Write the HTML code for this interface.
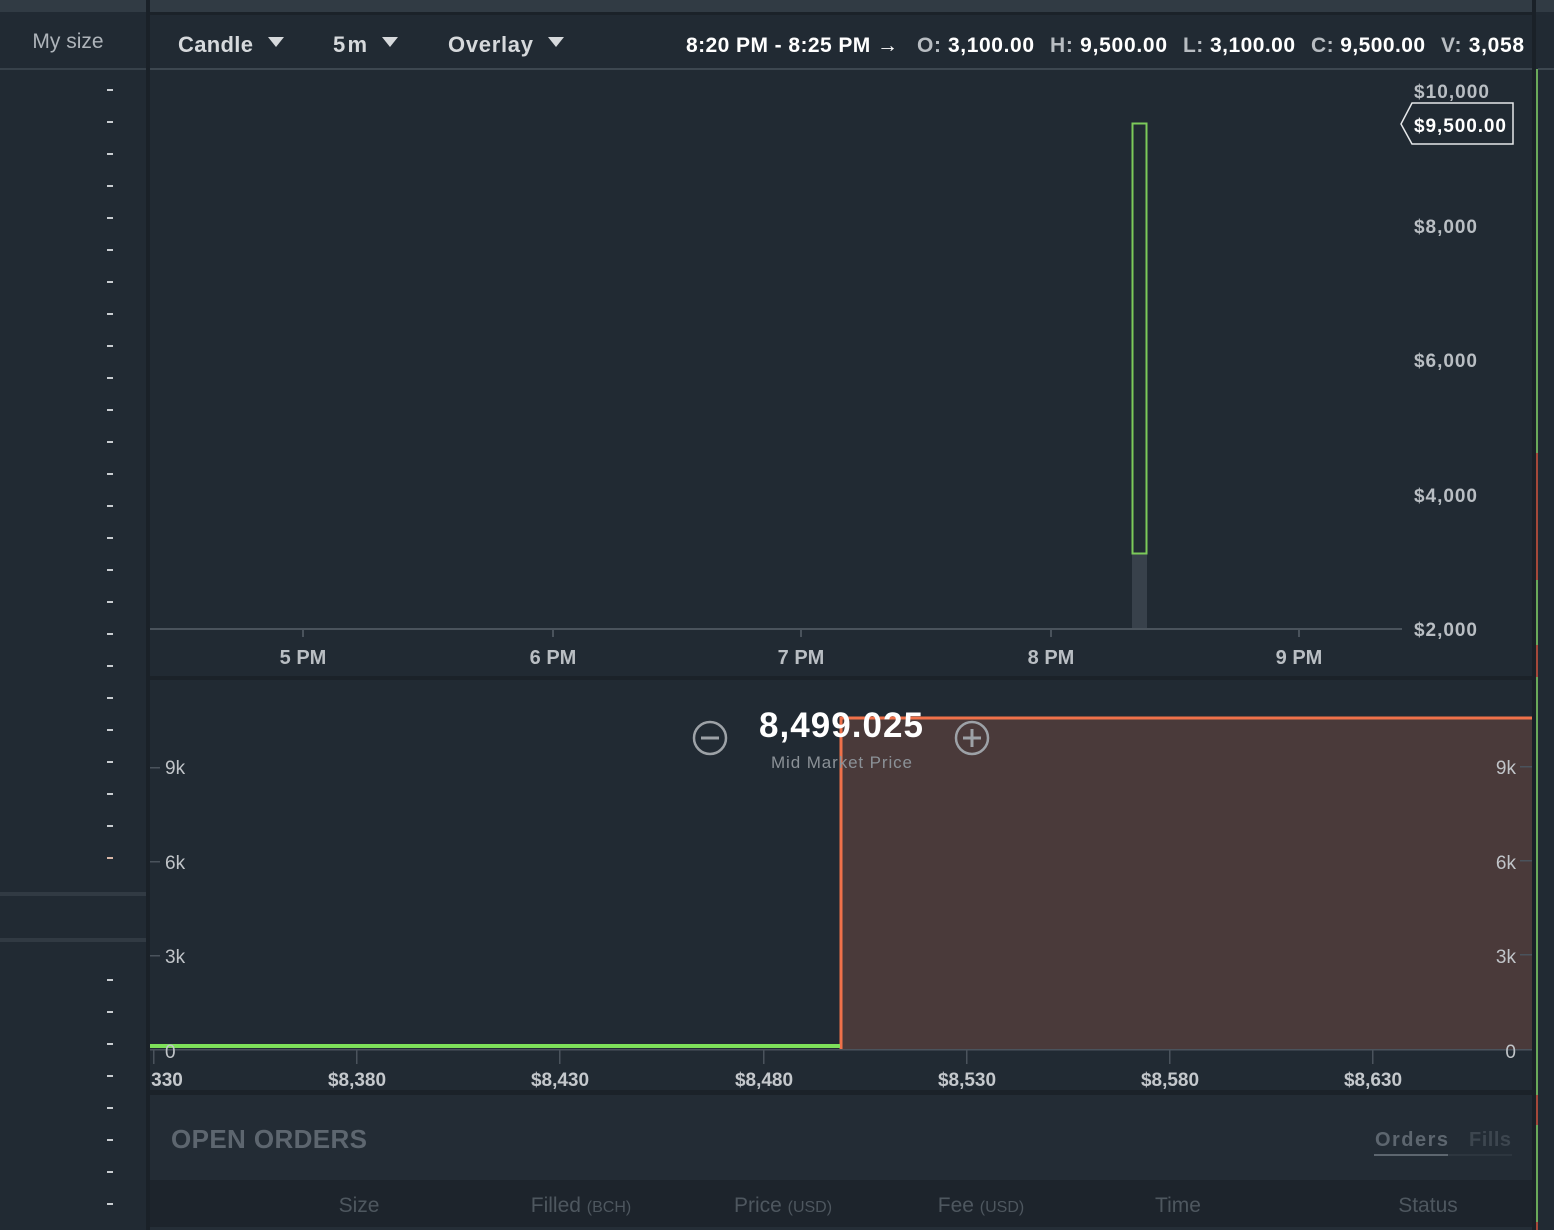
<!DOCTYPE html>
<html><head><meta charset="utf-8"><style>
html,body{margin:0;padding:0;background:#212a33;width:1554px;height:1230px;overflow:hidden}
svg{display:block}
text{font-family:"Liberation Sans",sans-serif}
.b{font-weight:bold}
</style></head><body>
<svg width="1554" height="1230" viewBox="0 0 1554 1230" xmlns="http://www.w3.org/2000/svg">
<rect x="0" y="0" width="1554" height="1230" fill="#212a33"/>
<rect x="0" y="0" width="1554" height="12" fill="#313b44"/>
<rect x="150" y="12" width="1382" height="3" fill="#1b2229"/>
<rect x="0" y="68" width="146" height="2" fill="#37414a"/>
<rect x="150" y="68" width="1382" height="2" fill="#3d4750"/>
<rect x="1538" y="68" width="16" height="2" fill="#3d4750"/>
<rect x="146" y="0" width="4" height="1230" fill="#1a2128"/>
<rect x="1532" y="0" width="4" height="1230" fill="#1a2128"/>
<rect x="1536" y="69" width="2" height="384" fill="#6aa95a"/>
<rect x="1536" y="453" width="2" height="127" fill="#a4483a"/>
<rect x="1536" y="580" width="2" height="65" fill="#6aa95a"/>
<rect x="1536" y="645" width="2" height="32" fill="#a4483a"/>
<rect x="1536" y="677" width="2" height="418" fill="#6aa95a"/>
<rect x="1536" y="1095" width="2" height="30" fill="#a4483a"/>
<rect x="1536" y="1125" width="2" height="97" fill="#6aa95a"/>
<rect x="1536" y="1222" width="2" height="8" fill="#a4483a"/>

<text x="68" y="48" fill="#aeb4ba" font-size="21" text-anchor="middle">My size</text>
<text x="178" y="52" fill="#d6d9dc" font-size="22" class="b" textLength="75">Candle</text>
<path d="M268 37h16l-8 10z" fill="#d6d9dc"/>
<text x="333" y="52" fill="#d6d9dc" font-size="22" class="b" textLength="34">5m</text>
<path d="M382 37h16l-8 10z" fill="#d6d9dc"/>
<text x="448" y="52" fill="#d6d9dc" font-size="22" class="b" textLength="85">Overlay</text>
<path d="M548 37h16l-8 10z" fill="#d6d9dc"/>
<g font-size="21" class="b" fill="#ffffff">
<text x="686" y="52" textLength="212">8:20 PM - 8:25 PM →</text>
<text x="917" y="52" textLength="117"><tspan fill="#b8bdc2">O:</tspan> 3,100.00</text>
<text x="1050" y="52" textLength="117"><tspan fill="#b8bdc2">H:</tspan> 9,500.00</text>
<text x="1183" y="52" textLength="112"><tspan fill="#b8bdc2">L:</tspan> 3,100.00</text>
<text x="1311" y="52" textLength="114"><tspan fill="#b8bdc2">C:</tspan> 9,500.00</text>
<text x="1441" y="52" textLength="83"><tspan fill="#b8bdc2">V:</tspan> 3,058</text>
</g>

<g fill="#c9cdd1">
<rect x="107" y="89" width="6" height="2"/><rect x="107" y="121" width="6" height="2"/><rect x="107" y="153" width="6" height="2"/><rect x="107" y="185" width="6" height="2"/><rect x="107" y="217" width="6" height="2"/><rect x="107" y="249" width="6" height="2"/><rect x="107" y="281" width="6" height="2"/><rect x="107" y="313" width="6" height="2"/><rect x="107" y="345" width="6" height="2"/><rect x="107" y="377" width="6" height="2"/><rect x="107" y="409" width="6" height="2"/><rect x="107" y="441" width="6" height="2"/><rect x="107" y="473" width="6" height="2"/><rect x="107" y="505" width="6" height="2"/><rect x="107" y="537" width="6" height="2"/><rect x="107" y="569" width="6" height="2"/><rect x="107" y="601" width="6" height="2"/><rect x="107" y="633" width="6" height="2"/><rect x="107" y="665" width="6" height="2"/><rect x="107" y="697" width="6" height="2"/><rect x="107" y="729" width="6" height="2"/><rect x="107" y="761" width="6" height="2"/><rect x="107" y="793" width="6" height="2"/><rect x="107" y="825" width="6" height="2"/><rect x="107" y="857" width="6" height="2" fill="#d9b8a8"/>
<rect x="107" y="979" width="6" height="2"/><rect x="107" y="1011" width="6" height="2"/><rect x="107" y="1043" width="6" height="2"/><rect x="107" y="1075" width="6" height="2"/><rect x="107" y="1107" width="6" height="2"/><rect x="107" y="1139" width="6" height="2"/><rect x="107" y="1171" width="6" height="2"/><rect x="107" y="1203" width="6" height="2"/>
</g>
<rect x="0" y="892" width="146" height="4" fill="#313a43"/>
<rect x="0" y="938" width="146" height="4" fill="#313a43"/>

<rect x="1132" y="554" width="15" height="75" fill="#38414b"/>
<rect x="1132.5" y="123.5" width="14" height="430" fill="none" stroke="#7cc95a" stroke-width="2"/>
<rect x="150" y="628" width="1252" height="2" fill="#4a535c"/>
<g fill="#4a535c"><rect x="302" y="629" width="2" height="8"/><rect x="552" y="629" width="2" height="8"/><rect x="800" y="629" width="2" height="8"/><rect x="1050" y="629" width="2" height="8"/><rect x="1298" y="629" width="2" height="8"/></g>
<g fill="#b9bec3" font-size="20" class="b" text-anchor="middle">
<text x="303" y="664">5 PM</text><text x="553" y="664">6 PM</text><text x="801" y="664">7 PM</text><text x="1051" y="664">8 PM</text><text x="1299" y="664">9 PM</text>
</g>
<g fill="#b9bec3" font-size="19" class="b">
<text x="1414" y="98" textLength="75">$10,000</text><text x="1414" y="233" textLength="63">$8,000</text><text x="1414" y="367" textLength="63">$6,000</text><text x="1414" y="502" textLength="63">$4,000</text><text x="1414" y="636" textLength="63">$2,000</text>
</g>
<path d="M1412 103H1513V144H1412L1401 124Z" fill="#212a33" stroke="#e6e8ea" stroke-width="1.5"/>
<text x="1414" y="132" fill="#ffffff" font-size="19" class="b" textLength="92">$9,500.00</text>

<rect x="150" y="676" width="1382" height="4" fill="#1b2229"/>

<rect x="840" y="717" width="692" height="333" fill="#4a3a3a"/>
<path d="M841 1050V718H1532" fill="none" stroke="#f0714a" stroke-width="3"/>
<rect x="150" y="1044" width="690" height="4" fill="#7ee05a"/>
<rect x="150" y="1049" width="1382" height="1.5" fill="#4a535c"/>
<g fill="#4a535c"><rect x="150" y="767" width="10" height="1.5"/><rect x="150" y="861" width="10" height="1.5"/><rect x="150" y="955" width="10" height="1.5"/>
<rect x="1520" y="766" width="12" height="1.5"/><rect x="1520" y="860" width="12" height="1.5"/><rect x="1520" y="954" width="12" height="1.5"/><rect x="1520" y="1049" width="12" height="1.5"/>
<rect x="153" y="1050" width="1.5" height="14"/><rect x="356" y="1050" width="1.5" height="14"/><rect x="559" y="1050" width="1.5" height="14"/><rect x="763" y="1050" width="1.5" height="14"/><rect x="966" y="1050" width="1.5" height="14"/><rect x="1169" y="1050" width="1.5" height="14"/><rect x="1372" y="1050" width="1.5" height="14"/></g>
<g fill="#c0c4c8" font-size="19">
<text x="165" y="774">9k</text><text x="165" y="869">6k</text><text x="165" y="963">3k</text><text x="165" y="1058">0</text>
<text x="1516" y="774" text-anchor="end">9k</text><text x="1516" y="869" text-anchor="end">6k</text><text x="1516" y="963" text-anchor="end">3k</text><text x="1516" y="1058" text-anchor="end">0</text>
</g>
<g fill="#c4c8cc" font-size="19" class="b" text-anchor="middle">
<text x="167" y="1086">330</text><text x="357" y="1086">$8,380</text><text x="560" y="1086">$8,430</text><text x="764" y="1086">$8,480</text><text x="967" y="1086">$8,530</text><text x="1170" y="1086">$8,580</text><text x="1373" y="1086">$8,630</text>
</g>
<circle cx="710" cy="738" r="16" fill="none" stroke="#9da2a7" stroke-width="2.5"/>
<rect x="701" y="736.5" width="18" height="3" fill="#9da2a7"/>
<circle cx="972" cy="738" r="16" fill="none" stroke="#9da2a7" stroke-width="2.5"/>
<rect x="963" y="736.5" width="18" height="3" fill="#9da2a7"/><rect x="970.5" y="729" width="3" height="18" fill="#9da2a7"/>
<text x="759" y="737" fill="#ffffff" font-size="35" class="b" textLength="164">8,499.025</text>
<text x="771" y="768" fill="#8b9197" font-size="17" textLength="141">Mid Market Price</text>

<rect x="150" y="1090" width="1382" height="5" fill="#1b2229"/>
<rect x="150" y="1095" width="1382" height="85" fill="#232c35"/>
<text x="171" y="1148" fill="#5d666f" font-size="26" class="b" textLength="196">OPEN ORDERS</text>
<text x="1375" y="1146" fill="#5d666f" font-size="20" class="b" textLength="73">Orders</text>
<text x="1469" y="1146" fill="#3d464f" font-size="20" class="b" textLength="42">Fills</text>
<rect x="1374" y="1154" width="138" height="2" fill="#2d363f"/>
<rect x="1374" y="1154" width="74" height="2" fill="#5d666f"/>
<rect x="150" y="1180" width="1382" height="47" fill="#1d242c"/>
<rect x="150" y="1227" width="1382" height="3" fill="#252e37"/>
<g fill="#4e575f" font-size="21" text-anchor="middle">
<text x="359" y="1212">Size</text>
<text x="581" y="1212">Filled <tspan font-size="16">(BCH)</tspan></text>
<text x="783" y="1212">Price <tspan font-size="16">(USD)</tspan></text>
<text x="981" y="1212">Fee <tspan font-size="16">(USD)</tspan></text>
<text x="1178" y="1212">Time</text>
<text x="1428" y="1212">Status</text>
</g>
</svg>
</body></html>
